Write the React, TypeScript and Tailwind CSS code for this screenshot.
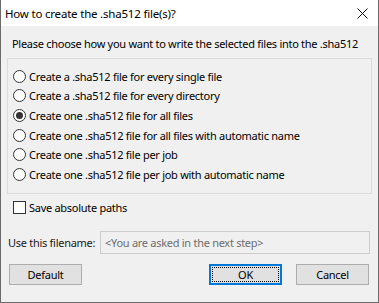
import React from "react";

const options = [
  "Create a .sha512 file for every single file",
  "Create a .sha512 file for every directory",
  "Create one .sha512 file for all files",
  "Create one .sha512 file for all files with automatic name",
  "Create one .sha512 file per job",
  "Create one .sha512 file per job with automatic name",
];
const rowH = ["h-[20px]", "h-[19px]", "h-[20px]", "h-[20px]", "h-[19px]", "h-[20px]"];

function Radio({ checked }: { checked: boolean }) {
  return (
    <span className="w-[13px] h-[13px] rounded-full border border-[#333333] bg-white flex items-center justify-center shrink-0">
      {checked && <span className="w-[7px] h-[7px] rounded-full bg-[#333333]" />}
    </span>
  );
}

export default function App() {
  return (
    <div
      className="w-[379px] h-[303px] flex flex-col bg-[#f0f0f0] border-l border-r border-b border-[#6b6b6b] text-[11px] tracking-[-0.28px] text-black leading-[15px] whitespace-nowrap"
      style={{ fontFamily: '"Noto Sans", "Open Sans", sans-serif' }}
    >
      <div className="h-[26px] bg-white flex items-center justify-between shrink-0">
        <span className="pl-[4px] text-[11.5px] tracking-[-0.2px]">How to create the .sha512 file(s)?</span>
        <svg width="11" height="11" viewBox="0 0 11 11" className="mr-[10px]">
          <path d="M0.5 0.5 L10.5 10.5 M10.5 0.5 L0.5 10.5" stroke="#111" strokeWidth="1" />
        </svg>
      </div>
      <div className="flex flex-col px-[5px]">
        <div className="pl-[6px] mt-[10px] h-[15px]">Please choose how you want to write the selected files into the .sha512</div>
        <div className="mt-[7px] ml-px w-[365px] h-[136px] border border-[#dcdcdc] pt-[7px] flex flex-col">
          {options.map((o, i) => (
            <div key={o} className={`${rowH[i]} flex items-center pl-[5px] gap-[3px]`}>
              <Radio checked={i === 2} />
              <span>{o}</span>
            </div>
          ))}
        </div>
        <div className="mt-[6px] h-[14px] flex items-center pl-[7px] gap-[3px]">
          <span className="w-[13px] h-[13px] border border-[#333333] bg-white shrink-0" />
          <span>Save absolute paths</span>
        </div>
        <div className="mt-[17px] flex items-center h-[23px]">
          <span className="pl-[2px] w-[94px] text-[#1a1a1a]">Use this filename:</span>
          <div className="w-[270px] h-[23px] border border-[#cccccc] bg-[#f0f0f0] flex items-center pl-[4px] text-[#6d6d6d]">
            &lt;You are asked in the next step&gt;
          </div>
        </div>
        <div className="mt-[10px] flex items-center h-[21px]">
          <div className="ml-[3px] w-[73px] h-[21px] bg-[#e1e1e1] border border-[#adadad] flex items-center justify-center">
            Default
          </div>
          <div className="ml-auto w-[73px] h-[21px] bg-[#e1e1e1] border-2 border-[#0078d7] p-px">
            <div className="w-full h-full border border-dotted border-black flex items-center justify-center">OK</div>
          </div>
          <div className="ml-[14px] mr-[4px] w-[73px] h-[21px] bg-[#e1e1e1] border border-[#adadad] flex items-center justify-center">
            Cancel
          </div>
        </div>
      </div>
    </div>
  );
}
